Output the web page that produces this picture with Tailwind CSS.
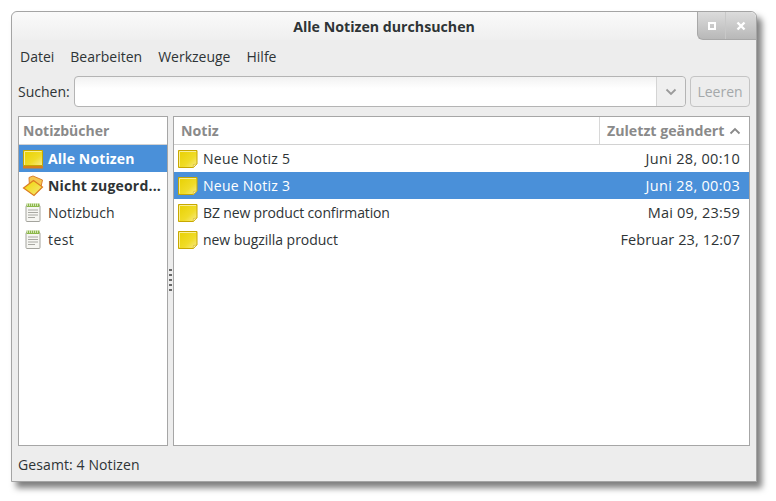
<!DOCTYPE html>
<html lang="de">
<head>
<meta charset="UTF-8">
<title>Alle Notizen durchsuchen</title>
<script src="https://cdn.jsdelivr.net/npm/@tailwindcss/browser@4"></script>
</head>
<body class="bg-white w-[776px] h-[501px] overflow-hidden font-['Open_Sans',sans-serif] text-[14px] text-[#2e3436]">
<svg class="absolute w-0 h-0">
  <defs>
    <linearGradient id="noteFill" x1="0" y1="0" x2="1" y2="1">
      <stop offset="0" stop-color="#e8d000"/><stop offset="0.6" stop-color="#f0dc28"/><stop offset="1" stop-color="#f8ec90"/>
    </linearGradient>
    <linearGradient id="diamondFill" x1="0" y1="0" x2="1" y2="1">
      <stop offset="0" stop-color="#f0d400"/><stop offset="1" stop-color="#f6e878"/>
    </linearGradient>
    <symbol id="note" viewBox="0 0 22 22">
      <path d="M1.500 2.500h18.500v13.500l-3.500 3.500h-15z" fill="url(#noteFill)" stroke="#c8a800"/>
      <path d="M2.500 18.500v-15h16.500" fill="none" stroke="#f8ee98"/>
      <path d="M20 16l-3.500 .5-.5 3z" fill="#fff8d0" stroke="#d4b820" stroke-width=".7"/>
    </symbol>
    <symbol id="book" viewBox="0 0 22 22">
      <rect x="4" y="3.500" width="14" height="16" rx="1" fill="#f6f6f2" stroke="#a4a49e"/>
      <rect x="4.500" y="1.500" width="13" height="3.500" fill="#8cb84a"/>
      <path d="M5.500 1v3M7.500 1v3M9.500 1v3M11.500 1v3M13.500 1v3M15.500 1v3" stroke="#e4efcf" stroke-width=".8"/>
      <path d="M6 8h10M6 10.500h10M6 13h10M6 15.500h7" stroke="#a8a8a2"/>
    </symbol>
  </defs>
</svg>

<div class="relative ml-[11px] mt-[11px] w-[746px] h-[471px] flex flex-col rounded-t-[6px] border border-[#a4a4a4] bg-[#ededed] shadow-[5px_6px_6px_rgba(0,0,0,0.5)]">
  <!-- titlebar -->
  <div class="h-[28px] shrink-0 flex items-center justify-center pt-[2px] rounded-t-[6px] bg-gradient-to-b from-[#fafafa] to-[#efefef] font-bold text-[14.200px]">Alle Notizen durchsuchen</div>
  <div class="absolute top-0 right-0 w-[59px] h-[28px] flex rounded-bl-[6px] rounded-tr-[6px] border-b border-l border-[#a8a8a8] bg-gradient-to-b from-[#dcdcdc] to-[#b8b8b8]">
    <div class="w-[28px] flex items-center justify-center border-r border-[#c8c8c8]">
      <div class="w-[8px] h-[8px] border-2 border-white"></div>
    </div>
    <div class="flex-1 flex items-center justify-center">
      <svg width="10" height="10" viewBox="0 0 10 10"><path d="M1.500 1.500l7 7M8.500 1.500l-7 7" stroke="#fff" stroke-width="2.400"/></svg>
    </div>
  </div>

  <!-- menubar -->
  <div class="h-[36px] shrink-0 flex items-center gap-[16px] pl-[8px] pb-[3px]">
    <span>Datei</span><span>Bearbeiten</span><span>Werkzeuge</span><span>Hilfe</span>
  </div>

  <!-- search -->
  <div class="h-[31px] shrink-0 flex items-center pl-[6px] pr-[6px]">
    <span class="w-[56px]">Suchen:</span>
    <div class="w-[612px] h-[31px] flex rounded-[4px] border border-[#b4b4b4] bg-gradient-to-b from-[#f2f2f2] to-white to-40%">
      <div class="flex-1"></div>
      <div class="w-[29px] flex items-center justify-center border-l border-[#d4d4d4] bg-[#efefef] rounded-r-[4px]">
        <svg width="12" height="8" viewBox="0 0 12 8"><path d="M1.500 1.500l4.500 4.500 4.500-4.500" fill="none" stroke="#9a9a9a" stroke-width="1.800"/></svg>
      </div>
    </div>
    <div class="ml-[4px] w-[60px] h-[31px] flex items-center justify-center rounded-[4px] border border-[#c4c4c4] text-[#a4a8aa]">Leeren</div>
  </div>

  <!-- panes -->
  <div class="h-[330px] shrink-0 flex mt-[9px] px-[6px]">
    <div class="w-[150px] shrink-0 flex flex-col border border-[#a6a6a6] bg-white">
      <div class="h-[28px] shrink-0 flex items-center pl-[4px] border-b border-[#d2d2d2] font-bold text-[#8a8a8a] text-[14px]">Notizbücher</div>
      <div class="h-[27px] flex items-center gap-[4px] pl-[3px] bg-[#4a90d9] text-white font-bold tracking-[0.15px]">
        <svg width="22" height="22" viewBox="0 0 22 22"><path d="M1.500 2.500h19v15h-19z" fill="url(#noteFill)" stroke="#c8a800"/><path d="M2.500 17v-13.500h17" fill="none" stroke="#f8ee98"/><path d="M1 18h20v2.500h-20z" fill="#d8801c"/></svg>
        <span>Alle Notizen</span>
      </div>
      <div class="h-[27px] flex items-center gap-[4px] pl-[3px] font-bold whitespace-nowrap">
        <svg width="22" height="22" viewBox="0 0 22 22"><path d="M7 2.500l4-1.500 9.500 4-2 9-11-2z" fill="#f6c850" stroke="#dc8030"/><path d="M1.500 13l10-7.500 9 6.500-8.500 8.500z" fill="url(#diamondFill)" stroke="#dc7c20" stroke-width="1.200"/></svg>
        <span class="tracking-[0.2px]">Nicht zugeord...</span>
      </div>
      <div class="h-[27px] flex items-center gap-[4px] pl-[3px]"><svg width="22" height="22"><use href="#book"/></svg><span>Notizbuch</span></div>
      <div class="h-[27px] flex items-center gap-[4px] pl-[3px]"><svg width="22" height="22"><use href="#book"/></svg><span class="tracking-[0.4px]">test</span></div>
    </div>

    <div class="w-[5px] shrink-0 flex flex-col items-center justify-center gap-[3px] pb-[2px]">
      <i class="w-[3px] h-[2px] bg-[#6a6a6a]"></i><i class="w-[3px] h-[2px] bg-[#6a6a6a]"></i><i class="w-[3px] h-[2px] bg-[#6a6a6a]"></i><i class="w-[3px] h-[2px] bg-[#6a6a6a]"></i><i class="w-[3px] h-[2px] bg-[#6a6a6a]"></i>
    </div>

    <div class="flex-1 flex flex-col border border-[#a6a6a6] bg-white">
      <div class="h-[28px] shrink-0 flex items-center border-b border-[#d2d2d2] font-bold text-[#8a8a8a] text-[14.200px]">
        <span class="flex-1 pl-[7px]">Notiz</span>
        <div class="w-[150px] h-full flex items-center justify-between pl-[7px] pr-[8px] border-l border-[#d8d8d8] whitespace-nowrap">
          <span>Zuletzt geändert</span>
          <svg width="12" height="8" viewBox="0 0 12 8"><path d="M1.500 6.500l4.500-4.500 4.500 4.500" fill="none" stroke="#8a8a8a" stroke-width="1.800"/></svg>
        </div>
      </div>
      <div class="h-[27px] flex items-center pl-[3px] pr-[9px]"><svg width="22" height="22"><use href="#note"/></svg><span class="ml-[4px] flex-1 tracking-[0.25px]">Neue Notiz 5</span><span class="text-[14.500px] tracking-[0.3px]">Juni 28, 00:10</span></div>
      <div class="h-[27px] flex items-center pl-[3px] pr-[9px] bg-[#4a90d9] text-white"><svg width="22" height="22"><use href="#note"/></svg><span class="ml-[4px] flex-1 tracking-[0.25px]">Neue Notiz 3</span><span class="text-[14.500px] tracking-[0.3px]">Juni 28, 00:03</span></div>
      <div class="h-[27px] flex items-center pl-[3px] pr-[9px]"><svg width="22" height="22"><use href="#note"/></svg><span class="ml-[4px] flex-1 tracking-[-0.15px]">BZ new product confirmation</span><span class="text-[14.500px] tracking-[0.2px]">Mai 09, 23:59</span></div>
      <div class="h-[27px] flex items-center pl-[3px] pr-[9px]"><svg width="22" height="22"><use href="#note"/></svg><span class="ml-[4px] flex-1 tracking-[-0.05px]">new bugzilla product</span><span class="text-[14.500px] tracking-[0.08px]">Februar 23, 12:07</span></div>
    </div>
  </div>

  <!-- status -->
  <div class="h-[36px] shrink-0 flex items-center pl-[6px] pt-[1px] tracking-[0.1px]">Gesamt: 4 Notizen</div>
</div>
</body>
</html>
